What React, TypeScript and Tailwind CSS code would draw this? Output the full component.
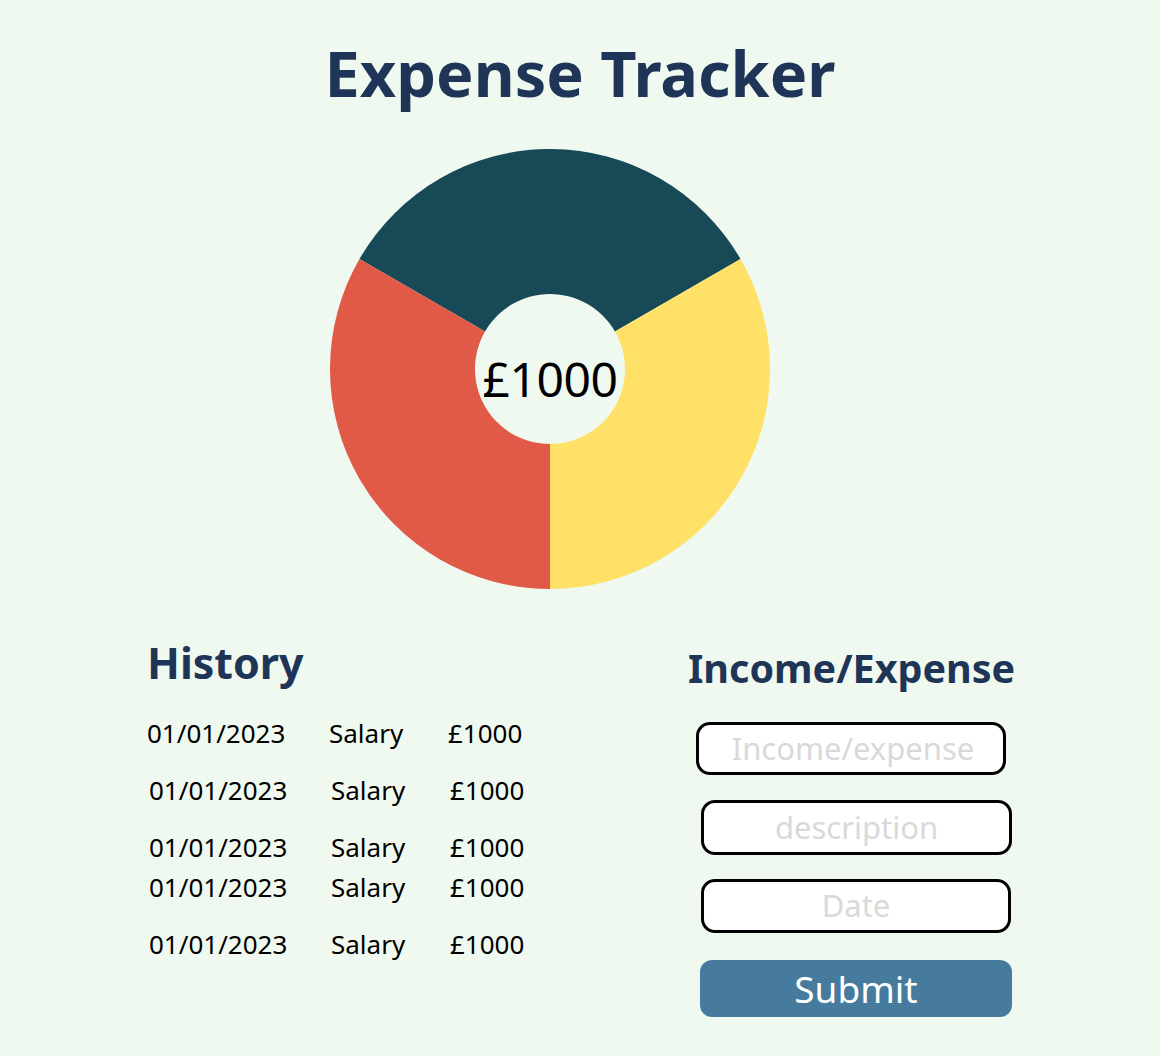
const rows = [
  { date: '01/01/2023', desc: 'Salary', amount: '£1000', cls: 'pl-0 h-[57px]' },
  { date: '01/01/2023', desc: 'Salary', amount: '£1000', cls: 'pl-[2px] h-[57px]' },
  { date: '01/01/2023', desc: 'Salary', amount: '£1000', cls: 'pl-[2px] h-[40px]' },
  { date: '01/01/2023', desc: 'Salary', amount: '£1000', cls: 'pl-[2px] h-[57px]' },
  { date: '01/01/2023', desc: 'Salary', amount: '£1000', cls: 'pl-[2px] h-[40px]' },
]

const font = { fontFamily: '"Noto Sans", "Open Sans", sans-serif' }

function Donut() {
  return (
    <div className="relative w-[440px] h-[440px]">
      <svg width="440" height="440" viewBox="0 0 440 440">
        <path d="M29.47,110 A220,220 0 0 1 410.53,110 L284.95,182.5 A75,75 0 0 0 155.05,182.5 Z" fill="#174957" />
        <path d="M410.53,110 A220,220 0 0 1 220,440 L220,295 A75,75 0 0 0 284.95,182.5 Z" fill="#fee166" />
        <path d="M220,440 A220,220 0 0 1 29.47,110 L155.05,182.5 A75,75 0 0 0 220,295 Z" fill="#e15a48" />
      </svg>
      <div className="absolute inset-0 flex items-center justify-center">
        <span className="text-[48px] text-black leading-none pt-[20px] tracking-[-0.5px]">£1000</span>
      </div>
    </div>
  )
}

export default function App() {
  return (
    <div className="w-[1160px] h-[1056px] bg-[#f0f9ef] overflow-hidden" style={font}>
      <h1 className="pt-[41px] text-center text-[63px] font-bold leading-none text-[#1e3557]">
        Expense Tracker
      </h1>

      <div className="flex pl-[330px] mt-[45px]">
        <Donut />
      </div>

      <div className="flex mt-[52px]">
        {/* History */}
        <div className="w-[688px] pl-[147px]">
          <h2 className="text-[43px] font-bold leading-none text-[#1e3557]">History</h2>
          <div className="mt-[36px]">
            {rows.map((r, i) => (
              <div key={i} className={`flex items-start text-[26px] leading-none text-black ${r.cls}`}>
                <span className="w-[182px]">{r.date}</span>
                <span className="w-[119px]">{r.desc}</span>
                <span>{r.amount}</span>
              </div>
            ))}
          </div>
        </div>

        {/* Form */}
        <div className="w-[340px] pt-[8px]">
          <h2 className="text-[39.5px] font-bold leading-none text-[#1e3557] whitespace-nowrap">Income/Expense</h2>
          <div className="mt-[33px] flex flex-col">
            <div className="ml-[8px] w-[310px] h-[53px] bg-white border-[3px] border-black rounded-[14px] flex items-center justify-center pl-[4px]">
              <span className="text-[31px] text-[#d9d9d9] leading-none">Income/expense</span>
            </div>
            <div className="mt-[25px] ml-[13px] w-[311px] h-[55px] bg-white border-[3px] border-black rounded-[14px] flex items-center justify-center">
              <span className="text-[31px] text-[#d9d9d9] leading-none">description</span>
            </div>
            <div className="mt-[24px] ml-[13px] w-[310px] h-[54px] bg-white border-[3px] border-black rounded-[14px] flex items-center justify-center">
              <span className="text-[31px] text-[#d9d9d9] leading-none">Date</span>
            </div>
            <button className="mt-[27px] ml-[12px] w-[312px] h-[57px] bg-[#467b9d] rounded-[12px] flex items-center justify-center">
              <span className="text-[37px] text-white leading-none">Submit</span>
            </button>
          </div>
        </div>
      </div>
    </div>
  )
}
